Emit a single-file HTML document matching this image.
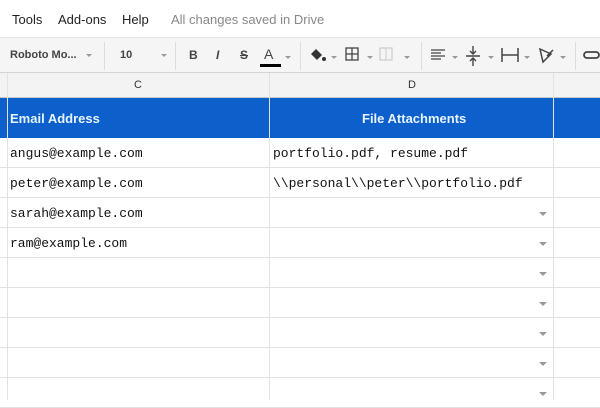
<!DOCTYPE html>
<html><head><style>
*{margin:0;padding:0;box-sizing:border-box}
body{width:600px;height:400px;overflow:hidden;background:#fff;font-family:"Liberation Sans",sans-serif;position:relative}
.abs{position:absolute}
.menu{top:12px;font-size:13px;color:#222}
.tb{top:37px;left:0;width:600px;height:36px;background:#f5f5f5;border-top:1px solid #e0e0e0;border-bottom:1px solid #d4d4d4}
.sep{position:absolute;top:4px;width:1px;height:28px;background:#ddd}
.ic{position:absolute;font-size:12px;color:#444;font-weight:bold}
.caret{position:absolute;width:0;height:0;border-left:3px solid transparent;border-right:3px solid transparent;border-top:3px solid #999}
.colh{top:73px;left:0;width:600px;height:25px;background:#f3f3f3;border-bottom:1px solid #c8c8c8;font-size:11px;color:#333}
.hdr{top:98px;left:0;width:600px;height:40px;background:#0d5fcc}
.row{position:absolute;left:0;width:600px;height:30px;border-bottom:1px solid #e2e2e2}
.vl{position:absolute;top:73px;width:1px;height:327px;background:#e2e2e2}
.mono{position:absolute;font-family:"Liberation Mono",monospace;font-size:13px;color:#111}
.dd{position:absolute;left:539px;width:0;height:0;border-left:4px solid transparent;border-right:4px solid transparent;border-top:4px solid #999}
</style></head><body>
<div class="abs menu" style="left:12px">Tools</div>
<div class="abs menu" style="left:58px">Add-ons</div>
<div class="abs menu" style="left:122px">Help</div>
<div class="abs menu" style="left:171px;color:#888">All changes saved in Drive</div>

<div class="abs tb">
 <div class="ic" style="left:10px;top:11px;font-size:11px">Roboto Mo...</div><div class="caret" style="left:86px;top:16px"></div>
 <div class="sep" style="left:104px"></div>
 <div class="ic" style="left:120px;top:11px;font-size:11px">10</div><div class="caret" style="left:161px;top:16px"></div>
 <div class="sep" style="left:175px"></div>
 <div class="ic" style="left:189px;top:10px">B</div>
 <div class="ic" style="left:216px;top:10px;font-style:italic">I</div>
 <div class="ic" style="left:240px;top:10px;text-decoration:line-through">S</div>
 <div class="ic" style="left:264px;top:8px;font-weight:normal;font-size:14px">A</div>
 <div class="abs" style="left:260px;top:26px;width:21px;height:3px;background:#000"></div>
 <div class="caret" style="left:285px;top:18px"></div>
 <div class="sep" style="left:300px"></div>
 <svg class="abs" style="left:308px;top:8px" width="20" height="20"><path d="M3 8 L8 3 L14 9 L9 14 Z" fill="#333"/><circle cx="16" cy="13" r="2" fill="#333"/></svg><div class="caret" style="left:331px;top:18px"></div>
 <svg class="abs" style="left:345px;top:9px" width="14" height="14"><rect x="1" y="1" width="12" height="12" fill="none" stroke="#444" stroke-width="1.3"/><path d="M7 1V13M1 7H13" stroke="#444" stroke-width="1.3"/></svg><div class="caret" style="left:367px;top:18px"></div>
 <svg class="abs" style="left:379px;top:9px" width="14" height="14"><rect x="1" y="1" width="12" height="12" fill="none" stroke="#ccc" stroke-width="1.2"/><path d="M7 1V13" stroke="#ccc"/></svg><div class="caret" style="left:404px;top:18px"></div>
 <div class="sep" style="left:421px"></div>
 <svg class="abs" style="left:430px;top:10px" width="16" height="14"><path d="M1 2H15M1 5H11M1 8H15M1 11H11" stroke="#444" stroke-width="1.2"/></svg><div class="caret" style="left:452px;top:18px"></div>
 <svg class="abs" style="left:465px;top:6px" width="16" height="24"><path d="M1 12H15M8 2V10M5 7L8 10L11 7M8 22V14M5 17L8 14L11 17" stroke="#444" stroke-width="1.4" fill="none"/></svg><div class="caret" style="left:488px;top:18px"></div>
 <svg class="abs" style="left:500px;top:8px" width="20" height="18"><path d="M2 2V16M18 2V16M2 9H18" stroke="#444" stroke-width="1.5"/></svg><div class="caret" style="left:524px;top:18px"></div>
 <svg class="abs" style="left:537px;top:8px" width="18" height="18"><path d="M3 3L14 8L6 16Z M10 10L16 4" stroke="#444" stroke-width="1.5" fill="none"/></svg><div class="caret" style="left:560px;top:18px"></div>
 <div class="sep" style="left:575px"></div>
 <svg class="abs" style="left:583px;top:13px" width="17" height="8"><rect x="1" y="1" width="15" height="6" rx="3" fill="none" stroke="#444" stroke-width="1.8"/></svg>
</div>

<div class="abs colh"><span class="abs" style="left:134px;top:6px">C</span><span class="abs" style="left:408px;top:6px">D</span></div>
<div class="abs hdr">
 <span class="abs" style="left:10px;top:13px;color:#e6f4ff;font-weight:bold;font-size:13px">Email Address</span>
 <span class="abs" style="left:362px;top:13px;color:#e6f4ff;font-weight:bold;font-size:13px">File Attachments</span>
</div>

<div class="row" style="top:138px"></div><div class="row" style="top:168px"></div><div class="row" style="top:198px"></div><div class="row" style="top:228px"></div><div class="row" style="top:258px"></div><div class="row" style="top:288px"></div><div class="row" style="top:318px"></div><div class="row" style="top:348px"></div><div class="row" style="top:378px"></div>
<div class="vl" style="left:7px"></div><div class="vl" style="left:269px"></div><div class="vl" style="left:553px"></div>

<div class="mono" style="left:10px;top:146px">angus@example.com</div>
<div class="mono" style="left:10px;top:176px">peter@example.com</div>
<div class="mono" style="left:10px;top:206px">sarah@example.com</div>
<div class="mono" style="left:10px;top:236px">ram@example.com</div>
<div class="mono" style="left:273px;top:146px">portfolio.pdf, resume.pdf</div>
<div class="mono" style="left:273px;top:176px">\\personal\\peter\\portfolio.pdf</div>

<div class="dd" style="top:212px"></div><div class="dd" style="top:242px"></div><div class="dd" style="top:272px"></div><div class="dd" style="top:302px"></div><div class="dd" style="top:332px"></div><div class="dd" style="top:362px"></div><div class="dd" style="top:392px"></div>
</body></html>
